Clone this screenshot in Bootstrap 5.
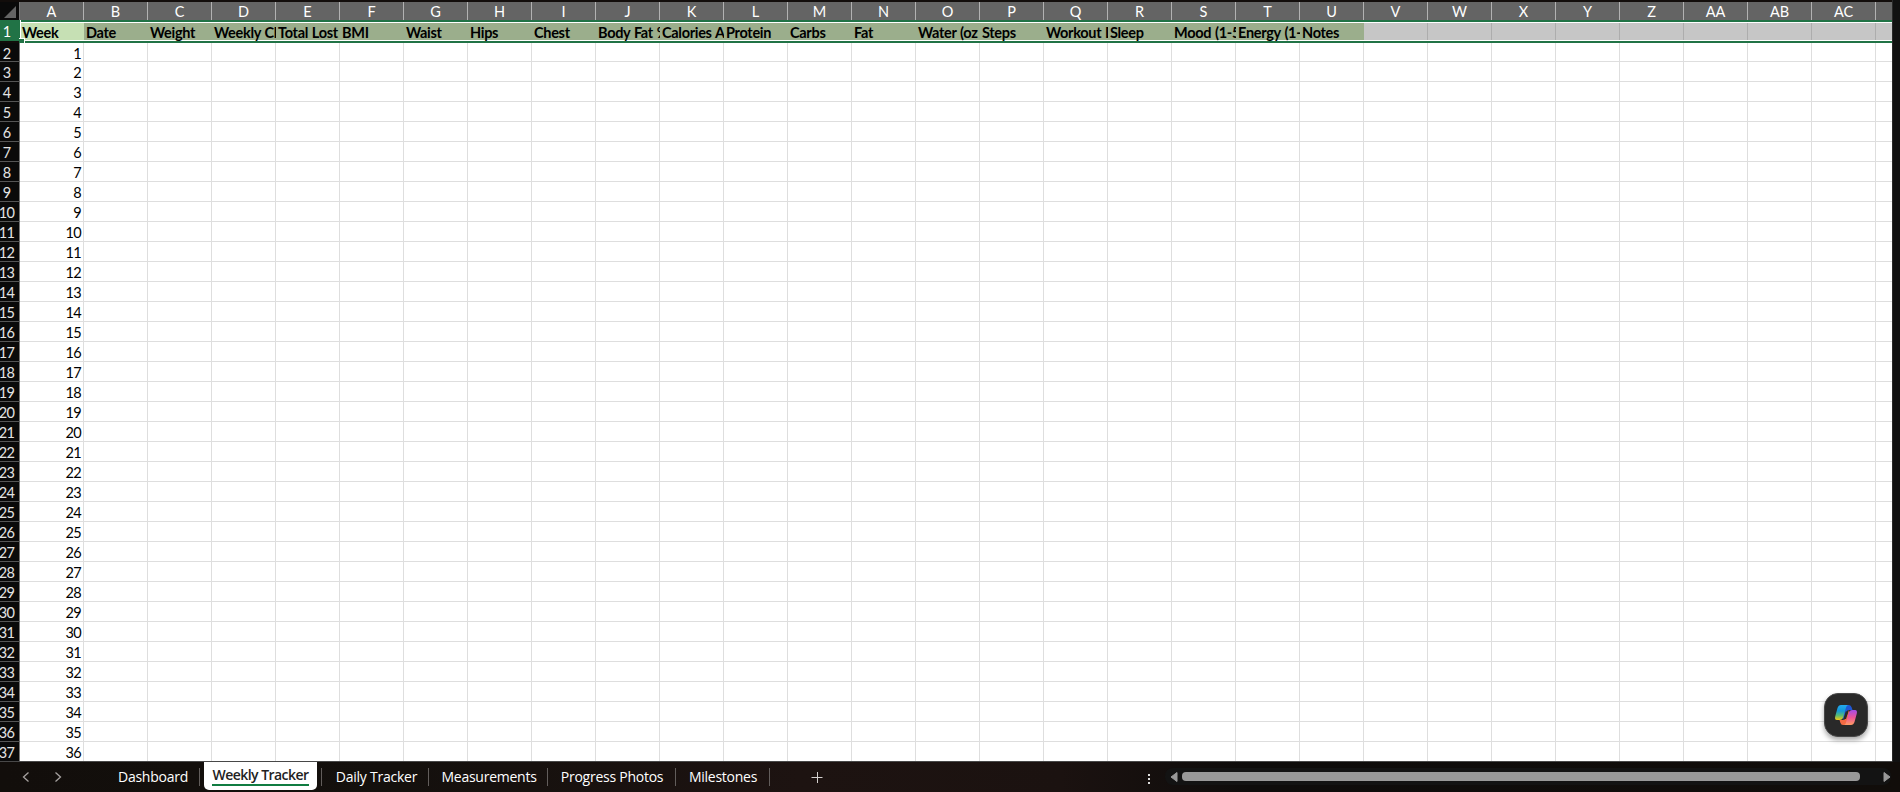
<!DOCTYPE html>
<html lang="en">
<head>
<meta charset="utf-8">
<title>Weekly Tracker</title>
<link href="https://cdn.jsdelivr.net/npm/bootstrap@5.3.0/dist/css/bootstrap.min.css" rel="stylesheet">
<style>
body{height:792px;background:#120d0b;font-family:Lato,"Open Sans",sans-serif;color:#000;overflow:hidden}
.sheet{width:1892px;height:762px;padding-top:2px;border-bottom:1px solid #484848;overflow:hidden}
.line{display:grid;grid-template-columns:20px repeat(30,64px);width:1892px;overflow:hidden;height:20px;flex:none}
.line>div{overflow:hidden;white-space:nowrap}
.heads{height:18px;background:#646464}
.heads>div{border-right:1px solid #b2b2b2;color:#fff;text-align:center;font-size:14.5px;line-height:20px}
.heads>.corner{background:#0a0a0a;border-color:#777}
.num{background:#0a0a0a;color:#e4e4e4;border-right:1px solid #777;border-bottom:1px solid #555;font-size:14.5px;line-height:21px;display:flex;justify-content:center;padding-right:6px;letter-spacing:-.7px}
.cell{background:#fff;border-right:1px solid #dedede;border-bottom:1px solid #dedede;font-size:14.5px;line-height:21px;text-align:right;padding-right:2px;letter-spacing:-.7px}
.last .cell,.last .num{border-bottom:0}
.second{height:19px}
.first{height:23px;position:relative}
.first .num{background:#217346;border-color:#217346;height:21px;line-height:24px;color:#fff}
.first .cell{height:23px;border:solid #217346;border-width:2px 0;box-shadow:inset 0 1px #fff,inset 0 -1px #fff;text-align:left;font-weight:700;padding:0 0 0 2px;line-height:21px;letter-spacing:-.3px;word-spacing:.6px}
.filled{background:#9bae8c!important}
.active-cell{background:#c6e0b4!important}
.blank{background:linear-gradient(to left,#adadad 1px,#c6c6c6 1px)!important}
.handle{position:absolute;left:19px;top:18px;width:6px;height:5px;background:#217346;border-top:1px solid #fff;border-right:1px solid #fff}
.edge{position:absolute;left:19px;top:0;width:2px;height:19px;background:#217346;border-right:1px solid #fff}
.rail{width:8px;height:762px;background:#111;border-left:1px solid #292929}
.tabs{height:30px;background:linear-gradient(90deg,#120e0b,#14100d 400px,#1d1311 800px,#1b1210 1060px,#0e0c0b 1250px,#110d0a);font:14px "Open Sans",sans-serif;color:#fff}
.tab{height:30px;line-height:30px;text-align:center;white-space:nowrap;flex:none;letter-spacing:-.25px;position:relative}
.tab.sep:after{content:"";position:absolute;right:0;top:6px;height:18px;width:1px;background:#625d5b}
.tab.on{height:28px;background:#fff;color:#222;border-radius:0 0 5px 5px;line-height:25px;font-weight:600;letter-spacing:-.55px}
.tab.on i{position:absolute;left:8px;right:8px;bottom:4px;height:2px;background:#107c41}
.copilot{position:absolute;left:1824px;top:693px;width:44px;height:44px;border-radius:14px;background:#292929;border:1px solid #484848;box-shadow:0 3px 5px #0005}
svg{display:block;flex:none}
</style>
</head>
<body>
<div class="d-flex"><main class="sheet d-flex flex-column" id="sheet"></main><div class="rail"></div></div>
<footer class="tabs d-flex">
<svg width="100" height="30" fill="none" stroke="#a5a19f" stroke-width="1.3"><path d="M28.500 10.500l-5 4.500 5 4.500M55.500 10.500l5 4.500-5 4.500"/></svg>
<div class="tab sep" style="width:100px;padding-left:6px">Dashboard</div>
<div class="tab on" style="width:113px;margin-left:4px"><span>Weekly Tracker</span><i></i></div>
<div class="tab sep" style="width:5px"></div>
<div class="tab sep" style="width:107px;padding-left:2px">Daily Tracker</div>
<div class="tab sep" style="width:119px;padding-left:1px">Measurements</div>
<div class="tab sep" style="width:128px">Progress Photos</div>
<div class="tab sep" style="width:94px">Milestones</div>
<svg width="1130" height="30"><path d="M41.500 15.500h11M47.500 10v11" stroke="#d4d0ce" fill="none"/><path d="M378 12h2v2h-2zm0 4h2v2h-2zm0 4h2v2h-2z" fill="#ddd"/><rect x="395" y="6" width="726" height="17" rx="8" fill="#131313"/><path d="M407 10.500v9l-6-4.500zM1114 10.500v9l6-4.500z" fill="#999" stroke="#999" stroke-linejoin="round"/><rect x="412" y="10" width="678" height="9" rx="4" fill="#999"/></svg>
</footer>
<div class="copilot d-flex align-items-center justify-content-center">
<svg width="24" height="22" viewBox="0 0 24 22"><defs><linearGradient id="a" x2="0" y2="1"><stop stop-color="#24a9ed"/><stop offset=".4" stop-color="#1398d8"/><stop offset=".7" stop-color="#5bbb71"/><stop offset="1" stop-color="#f4c913"/></linearGradient><linearGradient id="b" x2="0" y2="1"><stop stop-color="#a34be8"/><stop offset=".5" stop-color="#ec5598"/><stop offset="1" stop-color="#ff9c62"/></linearGradient></defs>
<path d="M11 1h4q2 0 2.700 2.500L18.500 6H15q-2 0-2.700 2L9 16 8 8z" fill="#2057d4"/><path d="M13 21H9q-2 0-2.700-2.500L5.500 16H9q2 0 2.700-2L15 6l1 8z" fill="#f36a43"/>
<path d="M7 1h7q-1.500.5-2 2.500L9.300 13Q8.500 16 5.500 16H3Q.4 16 1.200 12.500L3.500 4Q4.500 1 7 1z" fill="url(#a)"/><path d="M17 21h-7q1.500-.5 2-2.500L14.700 9Q15.500 6 18.500 6H21q2.600 0 1.800 3.500L20.500 18Q19.500 21 17 21z" fill="url(#b)"/><path d="M11.700 7.500h2.700L12 15H9.500z" fill="#292929"/></svg></div>
<script>
const labels=["Week","Date","Weight","Weekly Ch","Total Lost","BMI","Waist","Hips","Chest","Body Fat %","Calories A","Protein","Carbs","Fat","Water (oz","Steps","Workout D","Sleep","Mood (1-5","Energy (1-","Notes"];
const colName=i=>i<26?String.fromCharCode(65+i):i<29?"A"+String.fromCharCode(39+i):"";
let html='<div class="line heads"><div class="corner"><svg width="19" height="18"><path d="M16 4v12H4z" fill="#646464"/></svg></div>';
for(let c=0;c<30;c++)html+=`<div>${colName(c)}</div>`;
html+='</div><div class="line first"><div class="num">1</div>';
for(let c=0;c<30;c++)html+=`<div class="cell ${c===0?"active-cell":c<21?"filled":"blank"}">${labels[c]||""}</div>`;
html+='<span class="edge"></span><span class="handle"></span></div>';
for(let r=2;r<38;r++){
 html+=`<div class="line ${r===2?"second":""} ${r===37?"last":""}"><div class="num">${r}</div>`;
 for(let c=0;c<30;c++)html+=`<div class="cell">${c===0?r-1:""}</div>`;
 html+='</div>';
}
document.getElementById("sheet").innerHTML=html;
</script>
<script src="https://cdn.jsdelivr.net/npm/bootstrap@5.3.0/dist/js/bootstrap.bundle.min.js"></script>
</body>
</html>
